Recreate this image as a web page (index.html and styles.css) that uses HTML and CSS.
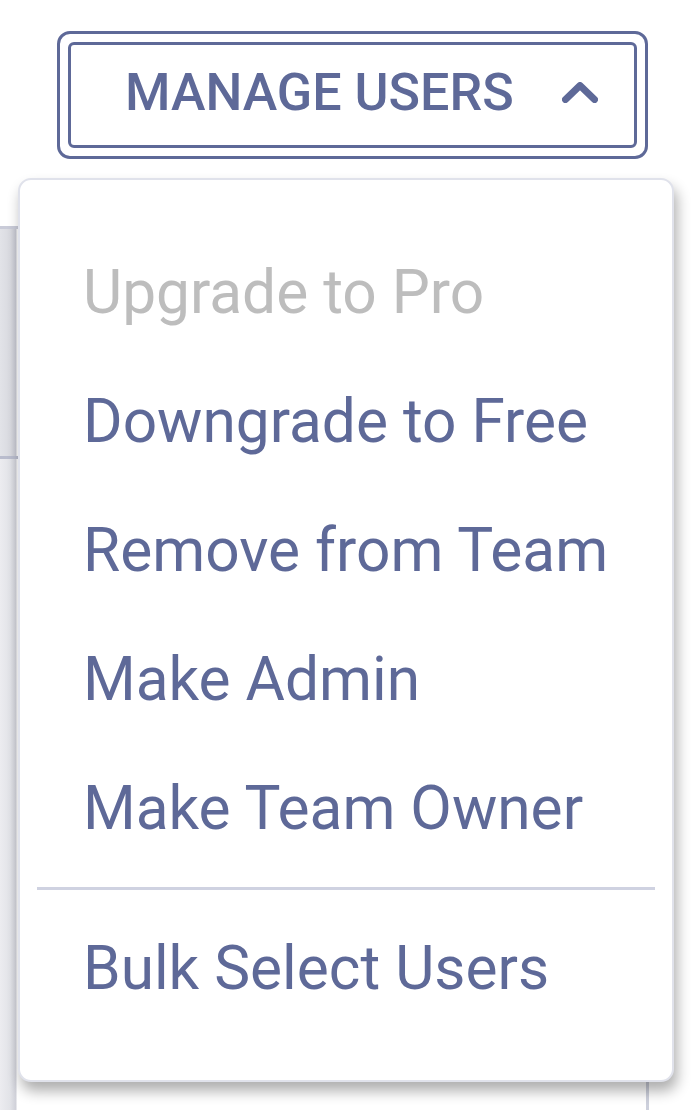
FILE: index.html
```html
<!DOCTYPE html>
<html lang="en">
<head>
    <meta charset="UTF-8">
    <meta name="viewport" content="width=device-width, initial-scale=1.0">
    <title>Manage Users</title>
    <link rel="stylesheet" href="styles.css">
</head>
<body>
    <div class="page">
        <!-- Toolbar -->
        <div class="toolbar">
            <div class="manage-ring">
                <button class="manage-btn">
                    <span>MANAGE USERS</span>
                    <svg class="chevron" width="36" height="21" viewBox="0 0 36 21">
                        <path d="M3.5 17.5 L18 3.5 L32.5 17.5" fill="none" stroke="currentColor" stroke-width="7" stroke-linecap="round" stroke-linejoin="round"/>
                    </svg>
                </button>
            </div>
        </div>

        <!-- Users table (behind the menu) -->
        <div class="table">
            <div class="row row-head"></div>
            <div class="row"></div>
            <div class="row"></div>
            <div class="row"></div>
        </div>

        <!-- Dropdown menu -->
        <div class="menu">
            <div class="menu-item disabled">Upgrade to Pro</div>
            <div class="menu-item">Downgrade to Free</div>
            <div class="menu-item">Remove from Team</div>
            <div class="menu-item">Make Admin</div>
            <div class="menu-item">Make Team Owner</div>
            <div class="menu-divider"></div>
            <div class="menu-item">Bulk Select Users</div>
        </div>
    </div>
</body>
</html>
```

FILE: styles.css
```css
/* Global Styles */
* {
    margin: 0;
    padding: 0;
    box-sizing: border-box;
}
body {
    font-family: Roboto, 'Liberation Sans', sans-serif;
    background: #fff;
    color: #5e6998;
    width: 698px;
    height: 1110px;
    overflow: hidden;
}
.page {
    position: relative;
    height: 1110px;
}

/* Toolbar */
.toolbar {
    padding: 31px 0 0 57px;
}
.manage-ring {
    width: 591px;
    height: 128px;
    padding: 8px;
    border: 3px solid #5e6998;
    border-radius: 13px;
}
.manage-btn {
    display: flex;
    align-items: center;
    width: 100%;
    height: 100%;
    padding: 0 0 4px 54px;
    border: 3px solid #5e6998;
    border-radius: 6px;
    background: #fff;
    color: #5e6998;
    font-family: inherit;
    font-size: 52px;
    font-weight: 500;
    line-height: 1;
    cursor: pointer;
}
.chevron {
    margin-left: 48px;
    margin-top: -2px;
}

/* Table behind */
.table {
    margin-top: 67px;
    width: 649px;
    border-right: 3px solid #cdd0dc;
}
.row {
    height: 225px;
    background: linear-gradient(to right, #ececf0 0, #e2e3e8 10px, #cfd0d8 16px, #fff 17px);
}
.row-head {
    height: 233px;
    border-top: 3px solid #c9cbd8;
    border-bottom: 3px solid #b9bccd;
    background: linear-gradient(to right, #e2e3e8 0, #d9dae0 10px, #c6c7d0 16px, #fff 17px);
}

/* Dropdown menu */
.menu {
    position: absolute;
    left: 18px;
    top: 178px;
    width: 656px;
    height: 904px;
    padding: 48px 0 0;
    background: #fff;
    border: 2px solid #e0e2eb;
    border-radius: 13px;
    box-shadow: 3px 9px 14px rgba(0, 0, 0, 0.32);
}
.menu-item {
    padding-left: 63px;
    font-size: 60.4px;
    line-height: 129px;
    white-space: nowrap;
}
.menu-item.disabled {
    color: #bdbdbd;
}
.menu-divider {
    height: 3px;
    margin: 14px 17px 14px;
    background: #cfd2e1;
}
```
